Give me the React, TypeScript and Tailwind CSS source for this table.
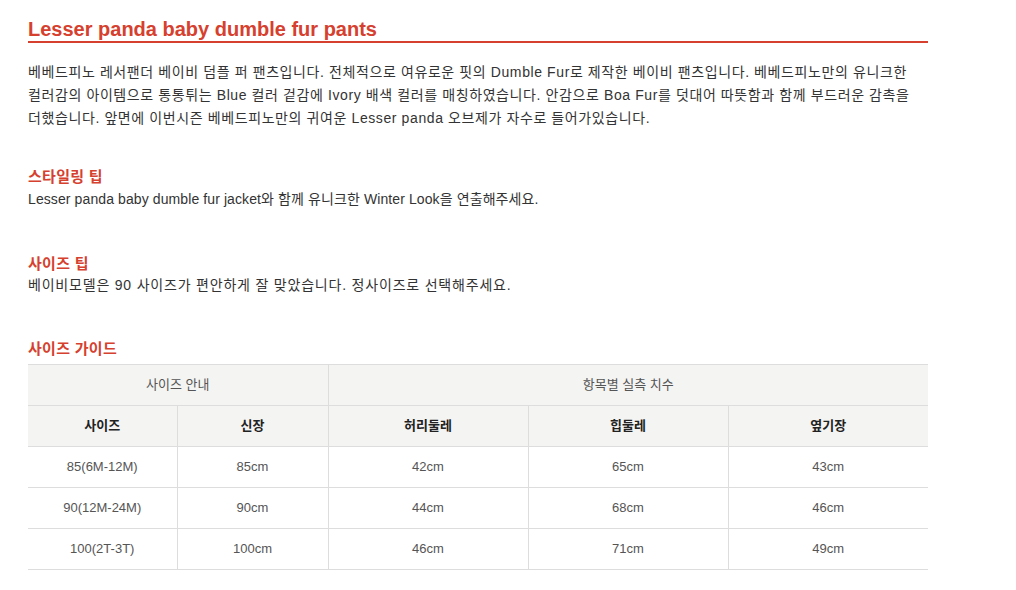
const font = { fontFamily: '"Liberation Sans", "Noto Sans CJK KR", sans-serif' };

const rows = [
  ['85(6M-12M)', '85cm', '42cm', '65cm', '43cm'],
  ['90(12M-24M)', '90cm', '44cm', '68cm', '46cm'],
  ['100(2T-3T)', '100cm', '46cm', '71cm', '49cm'],
];

export default function App() {
  return (
    <div className="min-h-[590px] bg-white text-[#333]" style={font}>
      <div className="w-[900px] ml-[28px] pt-[17px]">
        {/* Title */}
        <h1 className="text-[20px] font-bold leading-[24px] text-[#d6402e] border-b-2 border-[#d6402e] pb-[0px]">
          Lesser panda baby dumble fur pants
        </h1>

        {/* Description */}
        <p className="mt-[18px] text-[14px] leading-[23px] tracking-[0.6px] text-[#333]">
          베베드피노 레서팬더 베이비 덤플 퍼 팬츠입니다. 전체적으로 여유로운 핏의 Dumble Fur로 제작한 베이비 팬츠입니다. 베베드피노만의 유니크한
          <br />
          컬러감의 아이템으로 통통튀는 Blue 컬러 겉감에 Ivory 배색 컬러를 매칭하였습니다. 안감으로 Boa Fur를 덧대어 따뜻함과 함께 부드러운 감촉을
          <br />
          더했습니다. 앞면에 이번시즌 베베드피노만의 귀여운 Lesser panda 오브제가 자수로 들어가있습니다.
        </p>

        {/* Styling tip */}
        <h2 className="mt-[37px] text-[15px] font-bold leading-[20px] tracking-[0.3px] text-[#d6402e]">스타일링 팁</h2>
        <p className="mt-[1px] text-[14px] leading-[22px] tracking-[0.1px]">
          Lesser panda baby dumble fur jacket와 함께 유니크한 Winter Look을 연출해주세요.
        </p>

        {/* Size tip */}
        <h2 className="mt-[44px] text-[15px] font-bold leading-[20px] tracking-[0.3px] text-[#d6402e]">사이즈 팁</h2>
        <p className="mt-[0px] text-[14px] leading-[22px] tracking-[0.8px]">
          베이비모델은 90 사이즈가 편안하게 잘 맞았습니다. 정사이즈로 선택해주세요.
        </p>

        {/* Size guide */}
        <h2 className="mt-[43px] text-[15px] font-bold leading-[20px] tracking-[0.3px] text-[#d6402e]">사이즈 가이드</h2>
        <table className="mt-[5px] w-[900px] border-collapse table-fixed text-[13px]">
          <colgroup>
            <col className="w-[149px]" />
            <col className="w-[151px]" />
            <col className="w-[200px]" />
            <col className="w-[200px]" />
            <col className="w-[200px]" />
          </colgroup>
          <thead>
            <tr className="h-[41px] bg-[#f4f4f2]">
              <th colSpan={2} className="border-y border-r border-[#ddd] font-normal text-[#555]">사이즈 안내</th>
              <th colSpan={3} className="border-y border-l border-[#ddd] font-normal text-[#555]">항목별 실측 치수</th>
            </tr>
            <tr className="h-[41px] bg-[#f4f4f2]">
              {['사이즈', '신장', '허리둘레', '힙둘레', '옆기장'].map((h, i) => (
                <th
                  key={h}
                  className={`border-y border-[#ddd] font-bold text-[#222] ${i > 0 ? 'border-l' : ''}`}
                >
                  {h}
                </th>
              ))}
            </tr>
          </thead>
          <tbody>
            {rows.map((r) => (
              <tr key={r[0]} className="h-[41px]">
                {r.map((c, i) => (
                  <td
                    key={i}
                    className={`border-y border-[#ddd] text-center text-[#555] ${i > 0 ? 'border-l' : ''}`}
                  >
                    {c}
                  </td>
                ))}
              </tr>
            ))}
          </tbody>
        </table>
      </div>
    </div>
  );
}
